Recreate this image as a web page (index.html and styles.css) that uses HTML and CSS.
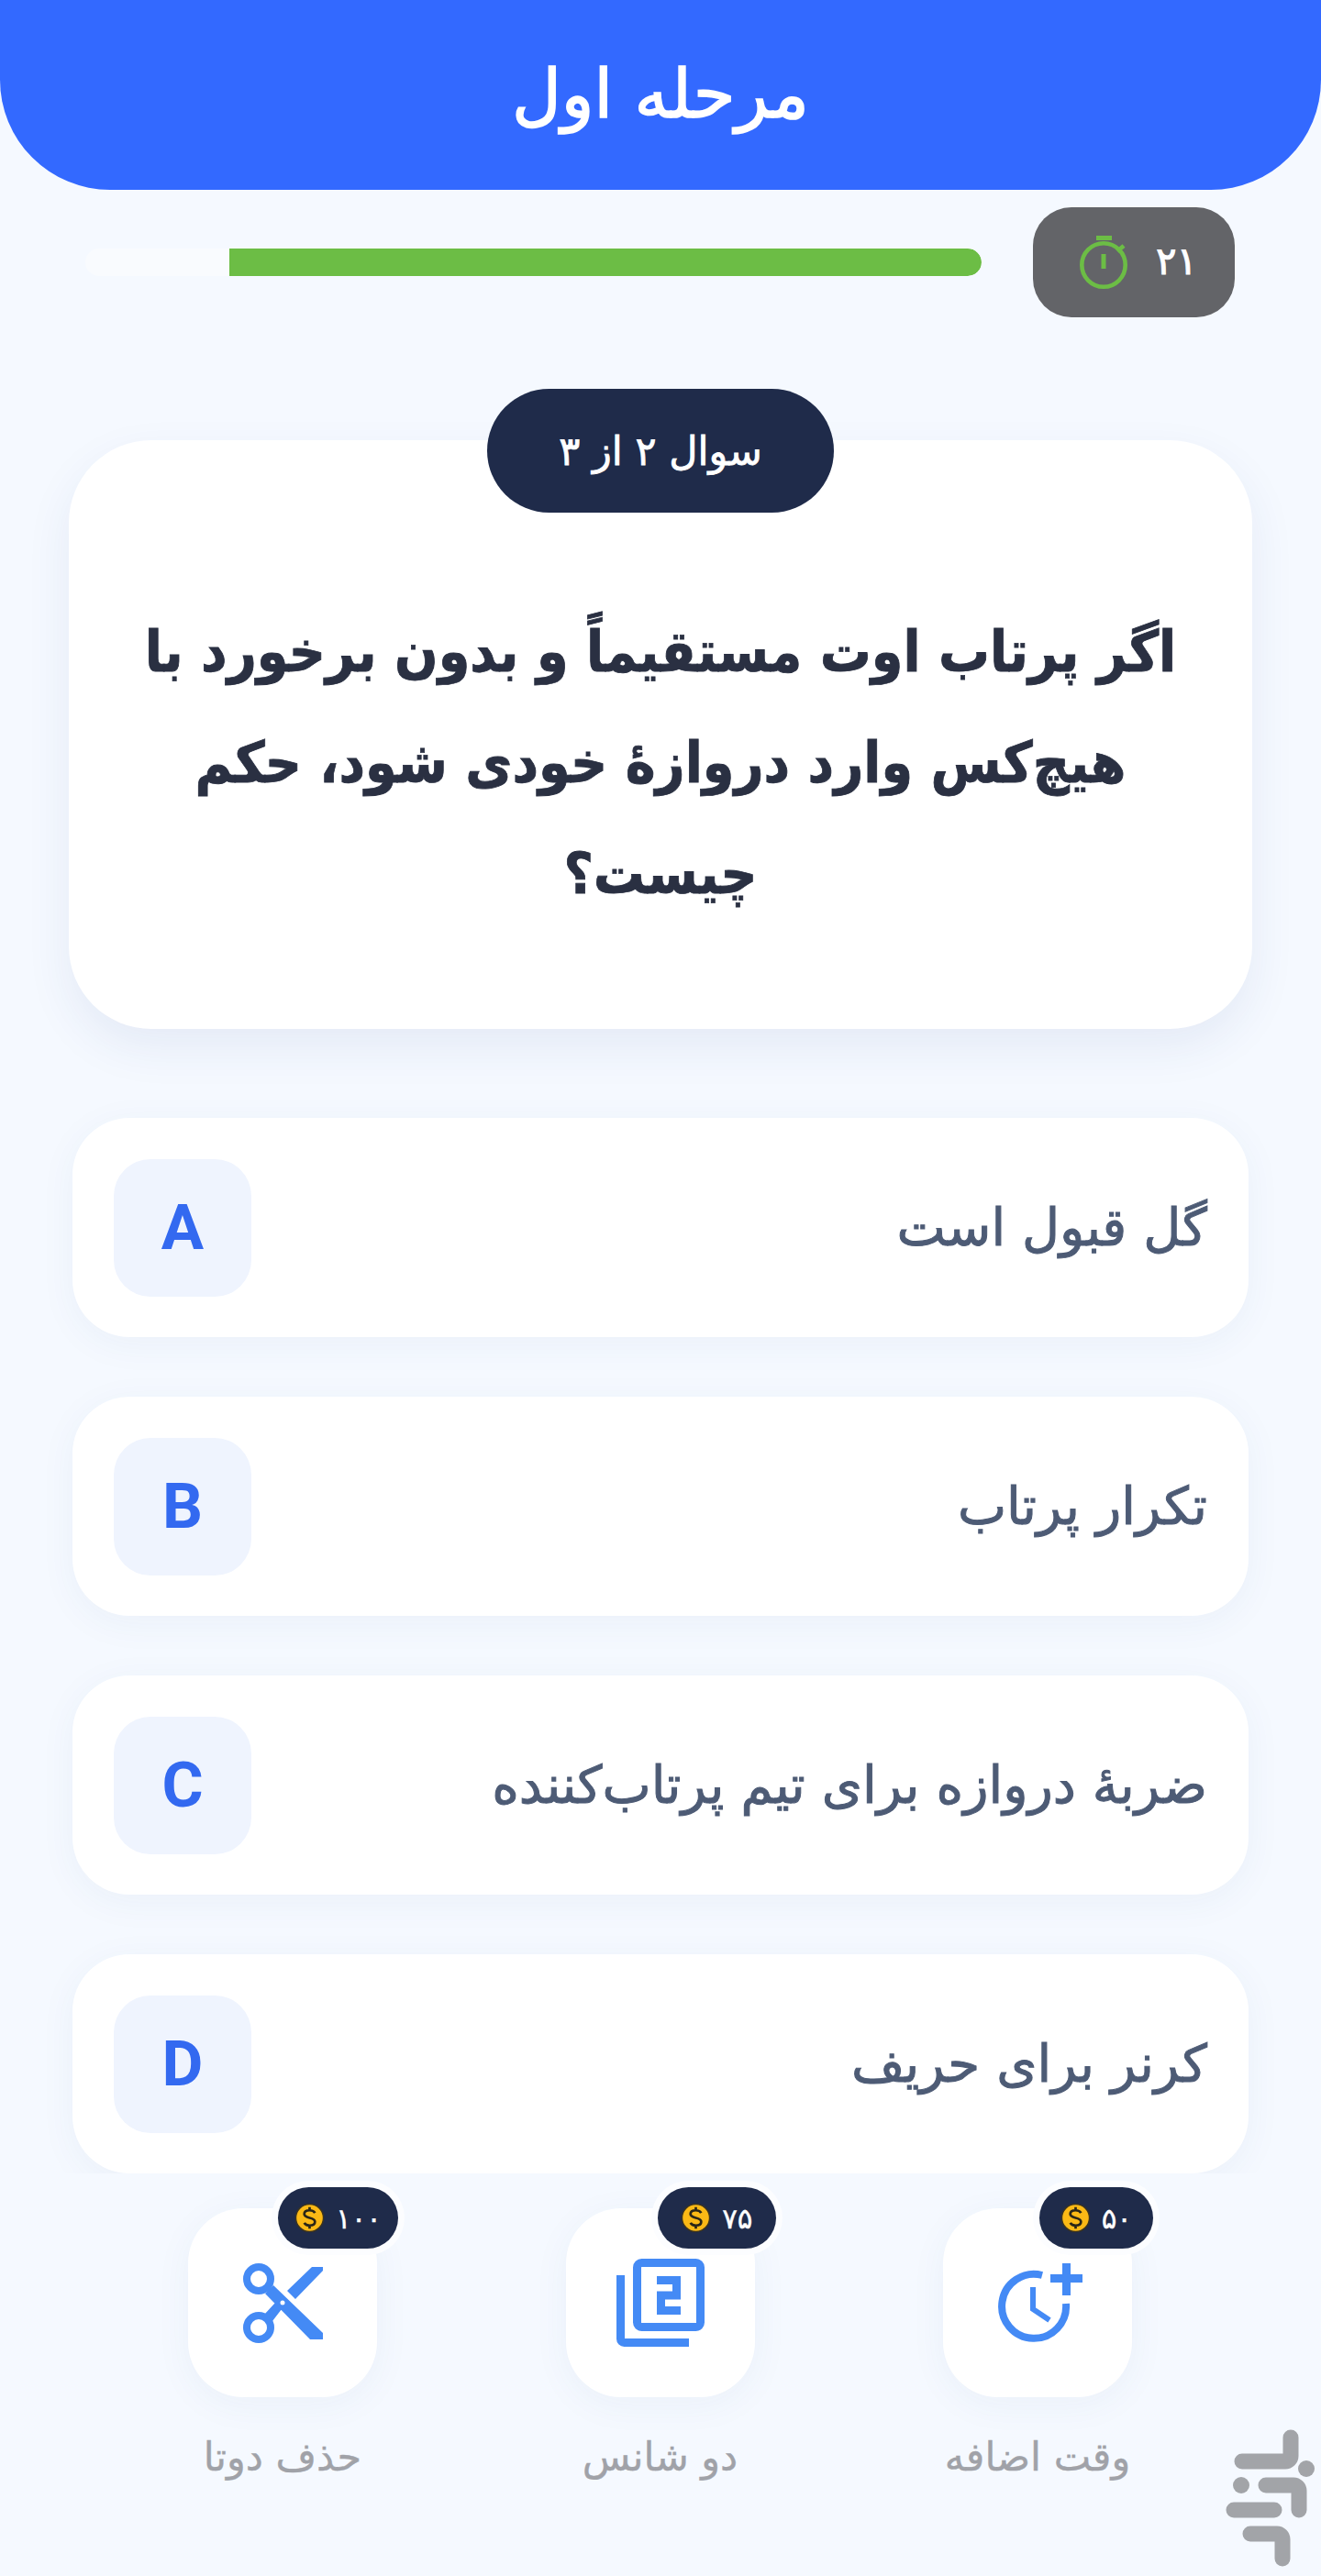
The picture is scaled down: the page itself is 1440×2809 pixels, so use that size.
FILE: index.html
```html
<!DOCTYPE html>
<html lang="fa" dir="rtl">
  <head>
    <meta charset="UTF-8" />
    <title>مرحله اول</title>
    <link rel="stylesheet" href="styles.css">
  </head>
  <body>
    <header class="top-bar">مرحله اول</header>

    <div class="timer-row">
      <div class="timer">
        <span class="timer-value">۲۱</span>
        <svg class="timer-icon" viewBox="0 0 52 58" width="52" height="58">
          <circle cx="26" cy="32" r="23.700" fill="none" stroke="#6cbd45" stroke-width="4.600" />
          <rect x="18" y="0" width="17" height="5" fill="#6cbd45" />
          <rect x="23.500" y="20" width="5" height="16" fill="#6cbd45" />
          <path d="M41 17l7-6" stroke="#6cbd45" stroke-width="4.600" />
        </svg>
      </div>
      <div class="progress"><div class="progress-fill"></div></div>
    </div>

    <section class="question-card">
      <div class="question-count">سوال ۲ از ۳</div>
      <p class="question-text">اگر پرتاب اوت مستقیماً و بدون برخورد با هیچ‌کس وارد دروازهٔ خودی شود، حکم چیست؟</p>
    </section>

    <div class="options">
      <div class="option"><span>گل قبول است</span><b class="letter">A</b></div>
      <div class="option"><span>تکرار پرتاب</span><b class="letter">B</b></div>
      <div class="option"><span>ضربهٔ دروازه برای تیم پرتاب‌کننده</span><b class="letter">C</b></div>
      <div class="option"><span>کرنر برای حریف</span><b class="letter">D</b></div>
    </div>

    <footer class="helpers">
      <div class="helper">
        <div class="helper-box">
          <div class="price price-mid"><span>۵۰</span><svg class="coin" viewBox="0 0 34 34"><use href="#coin" /></svg></div>
          <svg class="helper-icon clock-icon" viewBox="0 0 92 86" width="92" height="86">
            <path d="M48 13A35 35 0 1 0 74 44" fill="none" stroke="#448af5" stroke-width="8" />
            <path d="M38 26V50L56 62" fill="none" stroke="#448af5" stroke-width="6" />
            <path d="M57 16.500H92M74.500 0V35" fill="none" stroke="#448af5" stroke-width="9" />
          </svg>
        </div>
        <div class="helper-label">وقت اضافه</div>
      </div>
      <div class="helper">
        <div class="helper-box">
          <div class="price"><span>۷۵</span><svg class="coin" viewBox="0 0 34 34"><use href="#coin" /></svg></div>
          <svg class="helper-icon" viewBox="0 0 96 96" width="96" height="96">
            <path d="M4.500 18V87.500a4 4 0 0 0 4 4H79" fill="none" stroke="#448af5" stroke-width="9" />
            <rect x="22.500" y="4.500" width="69" height="70" rx="5" fill="none" stroke="#448af5" stroke-width="9" />
            <path d="M44 23.500H65.500V40H48.500V56.500H70" fill="none" stroke="#448af5" stroke-width="9" />
          </svg>
        </div>
        <div class="helper-label">دو شانس</div>
      </div>
      <div class="helper">
        <div class="helper-box">
          <div class="price price-wide"><span>۱۰۰</span><svg class="coin" viewBox="0 0 34 34"><use href="#coin" /></svg></div>
          <svg class="helper-icon" viewBox="0 0 87 87" width="87" height="87">
            <circle cx="17" cy="17" r="13" fill="none" stroke="#448af5" stroke-width="8" />
            <circle cx="17" cy="70" r="13" fill="none" stroke="#448af5" stroke-width="8" />
            <path fill="#448af5" d="M33 24L87 76V83H73L24 33zM23 56L35 43 42 50 32 63zM48 30L75 4H87V8L57 39z" />
            <circle cx="43" cy="43" r="2.500" fill="#fff" />
          </svg>
        </div>
        <div class="helper-label">حذف دوتا</div>
      </div>
    </footer>

    <svg class="brand" viewBox="0 0 98 150" width="98" height="150">
      <g fill="none" stroke="#a2a4a8" stroke-width="17" stroke-linecap="round" stroke-linejoin="round">
        <path d="M71 9V29a6 6 0 0 1-6 6H18" />
        <path d="M44 61H74a6 6 0 0 1 6 6V88" />
        <path d="M9 88H53" />
        <path d="M27 114H56a6 6 0 0 1 6 6V141" />
      </g>
      <circle cx="88" cy="43" r="9" fill="#a2a4a8" />
      <circle cx="17" cy="61" r="9" fill="#a2a4a8" />
    </svg>

    <svg class="defs" width="0" height="0">
      <defs>
        <g id="coin">
          <circle cx="17" cy="17" r="15.500" fill="#fbb915" stroke="#3a3320" stroke-width="1.500" />
          <path d="M23 11.500c-1-2-3-3-6-3-3.500 0-6 1.500-6 4.200 0 5.800 12 2.800 12 8.600 0 2.700-2.500 4.200-6 4.200-3 0-5-1-6-3M17 5v4M17 25v4" fill="none" stroke="#2a2618" stroke-width="2.800" />
        </g>
      </defs>
    </svg>
  </body>
</html>
```
FILE: styles.css
```css
* {
  box-sizing: border-box;
}

body {
  font-family: "DejaVu Sans", sans-serif;
  margin: 0;
  padding: 0;
  height: 2809px;
  background-color: #f5f9ff;
  position: relative;
  overflow: hidden;
}

.top-bar {
  height: 207px;
  padding-bottom: 4px;
  background-color: #3369ff;
  border-radius: 0 0 120px 120px;
  color: white;
  font-size: 74px;
  -webkit-text-stroke: 1.6px white;
  display: flex;
  align-items: center;
  justify-content: center;
}

.timer-row {
  display: flex;
  align-items: center;
  margin: 19px 94px 0 93px;
  gap: 56px;
}

.timer {
  width: 220px;
  height: 120px;
  padding-left: 10px;
  flex: none;
  background-color: #636468;
  border-radius: 42px;
  color: white;
  font-size: 42px;
  -webkit-text-stroke: 1px white;
  display: flex;
  align-items: center;
  justify-content: center;
  gap: 31px;
}

.timer-value {
  margin-bottom: 4px;
}

.progress {
  flex: 1;
  height: 30px;
  background-color: #f9fbfe;
  border-radius: 15px;
  overflow: hidden;
}

.progress-fill {
  width: 820px;
  height: 100%;
  background-color: #6cbd45;
  border-radius: 0 15px 15px 0;
}

.question-card {
  position: relative;
  margin: 134px 75px 0;
  height: 642px;
  background-color: white;
  border-radius: 90px;
  box-shadow: 0 20px 50px rgba(40, 70, 140, 0.08);
  padding: 170px 70px 0;
}

.question-count {
  position: absolute;
  top: -56px;
  left: 456px;
  width: 378px;
  height: 135px;
  background-color: #1f2b4a;
  border-radius: 68px;
  color: white;
  font-size: 43px;
  -webkit-text-stroke: 0.8px white;
  display: flex;
  align-items: center;
  justify-content: center;
}

.question-text {
  margin: 0;
  color: #2a3042;
  font-family: "DejaVu Sans Condensed", "DejaVu Sans", sans-serif;
  font-stretch: condensed;
  font-size: 62px;
  font-weight: bold;
  line-height: 121px;
  -webkit-text-stroke: 0.8px #2a3042;
  text-align: center;
}

.options {
  margin: 97px 79px 0;
  display: flex;
  flex-direction: column;
  gap: 65px;
}

.option {
  height: 239px;
  flex: none;
  background-color: white;
  border-radius: 62px;
  box-shadow: 0 8px 40px rgba(40, 70, 140, 0.05);
  display: flex;
  align-items: center;
  justify-content: space-between;
  padding: 0 45px;
  color: #4d5b75;
  font-size: 56.500px;
  -webkit-text-stroke: 1px #4d5b75;
}

.letter {
  width: 150px;
  height: 150px;
  background-color: #eff4fe;
  border-radius: 40px;
  color: #3369f0;
  font-family: Roboto, sans-serif;
  font-size: 69px;
  font-weight: bold;
  -webkit-text-stroke: 0;
  display: flex;
  align-items: center;
  justify-content: center;
}

.helpers {
  position: relative;
  height: 439px;
  background-color: #f5f9ff;
  display: flex;
  justify-content: space-between;
  padding: 38px 206px 0 205px;
}

.helper {
  width: 206px;
  display: flex;
  flex-direction: column;
  align-items: center;
}

.helper-box {
  position: relative;
  width: 206px;
  height: 206px;
  background-color: white;
  border-radius: 60px;
  box-shadow: 0 8px 40px rgba(40, 70, 140, 0.05);
  display: flex;
  align-items: center;
  justify-content: center;
}

.clock-icon {
  margin-left: 6px;
}

.price {
  position: absolute;
  top: -23px;
  right: -23px;
  height: 67px;
  padding: 0 25px;
  background-color: #1f2b4a;
  border-radius: 34px;
  box-shadow: 0 0 0 7px #fcfdff;
  color: white;
  font-size: 31px;
  -webkit-text-stroke: 0.4px white;
  display: flex;
  align-items: center;
  gap: 12px;
}

.price-mid {
  padding: 0 23px;
}

.price-wide {
  padding: 0 18px;
}

.coin {
  width: 33px;
  height: 33px;
}

.helper-label {
  margin-top: 40px;
  color: #a0a2a8;
  font-size: 43px;
  -webkit-text-stroke: 0.4px #a0a2a8;
  white-space: nowrap;
}

.brand {
  position: absolute;
  left: 1336px;
  top: 2649px;
}

.defs {
  position: absolute;
}
```
